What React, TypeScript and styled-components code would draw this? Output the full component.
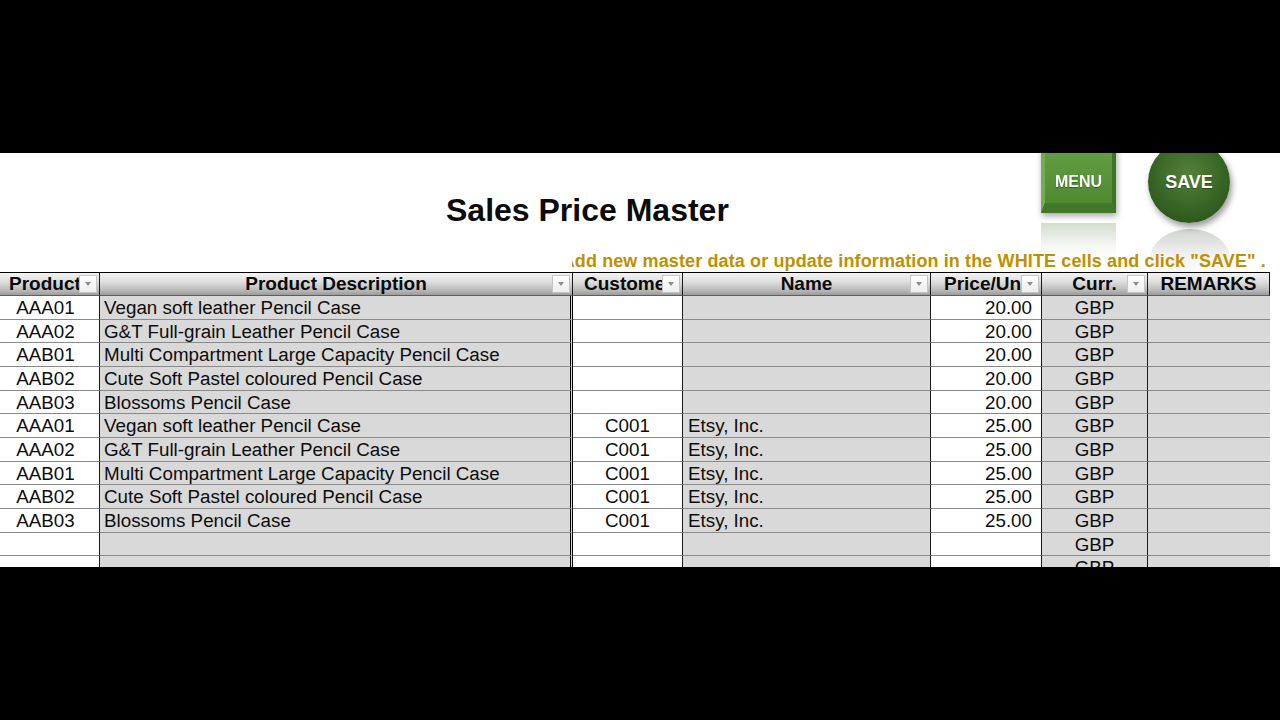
import React from 'react';
import styled, { createGlobalStyle } from 'styled-components';

const GlobalStyle = createGlobalStyle`
  html, body { margin: 0; padding: 0; background: #000; }
  body { font-family: "Liberation Sans", Arial, sans-serif; }
  #root { width: 1280px; height: 720px; }
`;

const COLS = '100px 473px 110px 248px 111px 106px 122px';

type Align = 'left' | 'center' | 'right';
type Edge = 'solid' | 'double' | 'none';

interface ColSpec {
  title: string;
  gray: boolean;
  align: Align;
  pl: number;
  pr: number;
  edge: Edge;
  hAlign: Align;
  hPl: number;
  filter: boolean;
}

const columns: ColSpec[] = [
  { title: 'Product ID', gray: false, align: 'center', pl: 0, pr: 8, edge: 'solid', hAlign: 'left', hPl: 9, filter: true },
  { title: 'Product Description', gray: true, align: 'left', pl: 4, pr: 0, edge: 'double', hAlign: 'center', hPl: 0, filter: true },
  { title: 'Customer ID', gray: false, align: 'center', pl: 0, pr: 0, edge: 'solid', hAlign: 'left', hPl: 11, filter: true },
  { title: 'Name', gray: true, align: 'left', pl: 5, pr: 0, edge: 'solid', hAlign: 'center', hPl: 0, filter: true },
  { title: 'Price/Unit', gray: false, align: 'right', pl: 0, pr: 9, edge: 'solid', hAlign: 'left', hPl: 13, filter: true },
  { title: 'Curr.', gray: true, align: 'center', pl: 0, pr: 0, edge: 'solid', hAlign: 'center', hPl: 0, filter: true },
  { title: 'REMARKS', gray: true, align: 'left', pl: 4, pr: 0, edge: 'none', hAlign: 'center', hPl: 0, filter: false },
];

const rows: string[][] = [
  ['AAA01', 'Vegan soft leather Pencil Case', '', '', '20.00', 'GBP', ''],
  ['AAA02', 'G&T Full-grain Leather Pencil Case', '', '', '20.00', 'GBP', ''],
  ['AAB01', 'Multi Compartment Large Capacity Pencil Case', '', '', '20.00', 'GBP', ''],
  ['AAB02', 'Cute Soft Pastel coloured Pencil Case', '', '', '20.00', 'GBP', ''],
  ['AAB03', 'Blossoms Pencil Case', '', '', '20.00', 'GBP', ''],
  ['AAA01', 'Vegan soft leather Pencil Case', 'C001', 'Etsy, Inc.', '25.00', 'GBP', ''],
  ['AAA02', 'G&T Full-grain Leather Pencil Case', 'C001', 'Etsy, Inc.', '25.00', 'GBP', ''],
  ['AAB01', 'Multi Compartment Large Capacity Pencil Case', 'C001', 'Etsy, Inc.', '25.00', 'GBP', ''],
  ['AAB02', 'Cute Soft Pastel coloured Pencil Case', 'C001', 'Etsy, Inc.', '25.00', 'GBP', ''],
  ['AAB03', 'Blossoms Pencil Case', 'C001', 'Etsy, Inc.', '25.00', 'GBP', ''],
  ['', '', '', '', '', 'GBP', ''],
  ['', '', '', '', '', 'GBP', ''],
];

const Screen = styled.div`
  width: 1280px;
  height: 720px;
  background: #000;
  display: flex;
  flex-direction: column;
  justify-content: center;
  overflow: hidden;
`;

const Sheet = styled.div`
  position: relative;
  height: 414px;
  background: #fff;
  overflow: hidden;
  display: flex;
  flex-direction: column;
`;

const Banner = styled.div`
  height: 119px;
  display: flex;
  flex-direction: column;
`;

const Title = styled.h1`
  margin: 39px 0 0 0;
  padding-left: 446px;
  height: 36px;
  font-size: 32px;
  line-height: 36px;
  font-weight: bold;
  color: #0b0b0b;
`;

const Instruction = styled.div`
  margin: 22px 0 0 572px;
  width: 694px;
  height: 22px;
  display: flex;
  justify-content: flex-end;
  overflow: hidden;
  position: relative;
  z-index: 2;
`;

const InstructionText = styled.span`
  flex-shrink: 0;
  white-space: nowrap;
  font-size: 18px;
  letter-spacing: 0.12px;
  line-height: 22px;
  font-weight: bold;
  color: #bf9000;
`;

const Table = styled.div`
  width: 1270px;
  display: flex;
  flex-direction: column;
`;

const HeadRow = styled.div`
  display: grid;
  grid-template-columns: ${COLS};
  height: 24px;
  box-sizing: border-box;
  border-top: 1px solid #000;
`;

const HeadCell = styled.div<{ $align: Align; $pl: number }>`
  position: relative;
  box-sizing: border-box;
  height: 23px;
  border-right: 1px solid #1a1a1a;
  border-bottom: 1px solid #5e5e5e;
  background: linear-gradient(to bottom, #f3f3f3 0%, #dedede 40%, #bdbdbd 75%, #9c9c9c 100%);
  font-size: 19px;
  line-height: 22px;
  font-weight: bold;
  color: #0a0a0a;
  white-space: nowrap;
  overflow: hidden;
  text-align: ${(p) => p.$align};
  padding-left: ${(p) => p.$pl}px;
`;

const HeadLabel = styled.span<{ $clip: boolean }>`
  display: block;
  overflow: hidden;
  white-space: nowrap;
  margin-right: ${(p) => (p.$clip ? 20 : 0)}px;
`;

const FilterButton = styled.span`
  position: absolute;
  right: 2px;
  top: 2px;
  width: 18px;
  height: 18px;
  box-sizing: border-box;
  border: 1px solid #c6c6c6;
  background: linear-gradient(to bottom, #ffffff, #ededed);
  display: flex;
  align-items: center;
  justify-content: center;

  &::after {
    content: '';
    width: 0;
    height: 0;
    border-left: 3.5px solid transparent;
    border-right: 3.5px solid transparent;
    border-top: 4px solid #8d8d8d;
  }
`;

const Row = styled.div`
  display: grid;
  grid-template-columns: ${COLS};
  height: 23.67px;
`;

const Cell = styled.div<{ $gray: boolean; $align: Align; $pl: number; $pr: number; $edge: Edge }>`
  box-sizing: border-box;
  height: 100%;
  background: ${(p) => (p.$gray ? '#d9d9d9' : '#ffffff')};
  border-bottom: 1px solid #8a8a8a;
  border-right: ${(p) =>
    p.$edge === 'double' ? '3px double #000' : p.$edge === 'none' ? '0' : '1px solid #1a1a1a'};
  text-align: ${(p) => p.$align};
  padding-left: ${(p) => p.$pl}px;
  padding-right: ${(p) => p.$pr}px;
  font-size: 18.8px;
  line-height: 23px;
  color: #0d0d0d;
  white-space: nowrap;
  overflow: hidden;
`;

/* Floating sheet shapes (buttons & reflections) */
const MenuShape = styled.div`
  position: absolute;
  left: 1041px;
  top: -8px;
  width: 75px;
  height: 68px;
  filter: drop-shadow(1px 3px 3px rgba(0, 0, 0, 0.35));
  z-index: 3;
`;

const ShapeLabel = styled.span<{ $size: number; $top: number }>`
  position: absolute;
  left: 0;
  right: 0;
  top: ${(p) => p.$top}px;
  text-align: center;
  color: #fff;
  font-weight: bold;
  font-size: ${(p) => p.$size}px;
  line-height: 22px;
  text-shadow: 0 1px 1px rgba(0, 0, 0, 0.35);
`;

const MenuReflection = styled.div`
  position: absolute;
  left: 1041px;
  top: 70px;
  width: 75px;
  height: 42px;
  background: linear-gradient(to bottom, rgba(120, 150, 105, 0.32), rgba(200, 210, 195, 0.12) 60%, rgba(255, 255, 255, 0));
  z-index: 1;
`;

const SaveShape = styled.div`
  position: absolute;
  left: 1148px;
  top: -12px;
  width: 82px;
  height: 82px;
  border-radius: 50%;
  background: radial-gradient(circle at 50% 40%, #52823a 0%, #3c6a28 45%, #2c561c 80%, #25491a 100%);
  box-shadow: 2px 4px 6px rgba(0, 0, 0, 0.4);
  z-index: 3;
`;

const SaveReflection = styled.div`
  position: absolute;
  left: 1150px;
  top: 76px;
  width: 80px;
  height: 50px;
  border-radius: 50% 50% 0 0 / 60% 60% 0 0;
  background: linear-gradient(to bottom, rgba(90, 100, 90, 0.28), rgba(160, 165, 160, 0.12) 55%, rgba(255, 255, 255, 0));
  z-index: 1;
`;

function MenuGraphic() {
  return (
    <svg width="75" height="68" viewBox="0 0 75 68">
      <defs>
        <linearGradient id="menuFace" x1="0" y1="0" x2="0" y2="1">
          <stop offset="0" stopColor="#64a044" />
          <stop offset="1" stopColor="#4f8a33" />
        </linearGradient>
      </defs>
      <rect x="0" y="0" width="75" height="68" fill="#4c8431" />
      <polygon points="0,0 4,0 4,58 0,68" fill="#73ad4e" />
      <polygon points="75,0 71,0 71,58 75,68" fill="#3f7327" />
      <polygon points="0,68 4,58 71,58 75,68" fill="#41782a" />
      <rect x="4" y="0" width="67" height="58" fill="url(#menuFace)" />
    </svg>
  );
}

export default function App() {
  return (
    <>
      <GlobalStyle />
      <Screen>
        <Sheet>
          <MenuShape>
            <MenuGraphic />
            <ShapeLabel $size={16} $top={26}>MENU</ShapeLabel>
          </MenuShape>
          <MenuReflection />
          <SaveShape>
            <ShapeLabel $size={18} $top={30}>SAVE</ShapeLabel>
          </SaveShape>
          <SaveReflection />
          <Banner>
            <Title>Sales Price Master</Title>
            <Instruction>
              <InstructionText>
                Add new master data or update information in the WHITE cells and click "SAVE" .
              </InstructionText>
            </Instruction>
          </Banner>
          <Table>
            <HeadRow>
              {columns.map((c) => (
                <HeadCell key={c.title} $align={c.hAlign} $pl={c.hPl}>
                  <HeadLabel $clip={c.hAlign === 'left'}>{c.title}</HeadLabel>
                  {c.filter && <FilterButton />}
                </HeadCell>
              ))}
            </HeadRow>
            {rows.map((r, i) => (
              <Row key={i}>
                {columns.map((c, j) => (
                  <Cell
                    key={j}
                    $gray={c.gray}
                    $align={c.align}
                    $pl={c.pl}
                    $pr={c.pr}
                    $edge={c.edge}
                  >
                    {r[j]}
                  </Cell>
                ))}
              </Row>
            ))}
          </Table>
        </Sheet>
      </Screen>
    </>
  );
}
